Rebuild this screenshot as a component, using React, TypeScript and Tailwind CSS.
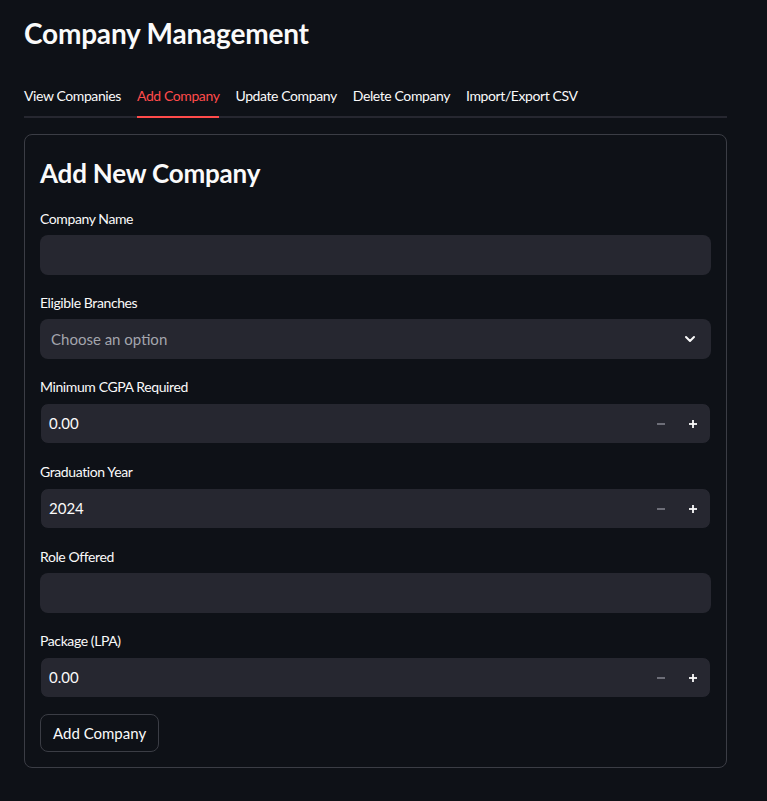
import React from 'react';

const tabs = ['View Companies', 'Add Company', 'Update Company', 'Delete Company', 'Import/Export CSV'];

function Label({ children }: { children: React.ReactNode }) {
  return (
    <div className="mb-[6px] h-[22px] pt-[1px] text-[14px] leading-[21px] tracking-[-0.4px] text-[#fafafa]">
      {children}
    </div>
  );
}

function TextField({ label }: { label: string }) {
  return (
    <div>
      <Label>{label}</Label>
      <div className="h-10 rounded-lg bg-[#262730]" />
    </div>
  );
}

function NumberField({ label, value }: { label: string; value: string }) {
  return (
    <div>
      <Label>{label}</Label>
      <div className="flex h-[41px] items-center rounded-lg border border-[#0e1117] bg-[#262730]">
        <span className="flex-1 pl-2 text-[15px] text-[#fafafa]">{value}</span>
        <span className="flex h-full w-8 items-center justify-center">
          <svg width="10" height="10" viewBox="0 0 10 10">
            <rect x="1" y="4.2" width="8" height="1.6" fill="#7f818b" />
          </svg>
        </span>
        <span className="mr-[1px] flex h-full w-8 items-center justify-center">
          <svg width="10" height="10" viewBox="0 0 10 10">
            <rect x="1" y="4.1" width="8" height="1.8" fill="#fafafa" />
            <rect x="4.1" y="1" width="1.8" height="8" fill="#fafafa" />
          </svg>
        </span>
      </div>
    </div>
  );
}

export default function App() {
  return (
    <div
      className="min-h-[801px] bg-[#0e1117] pl-6 pr-10 pt-[13px] text-[#fafafa]"
      style={{ fontFamily: 'Lato, "Noto Sans", sans-serif' }}
    >
      <h1 className="text-[28px] font-bold leading-[40px] tracking-[-0.2px]">Company Management</h1>

      <div className="mt-[32px] flex gap-4 border-b-2 border-[#262730]">
        {tabs.map((t) => (
          <div
            key={t}
            className={
              t === 'Add Company'
                ? '-mb-[2px] border-b-2 border-[#ff4b4b] pb-[10px] text-[14px] leading-[21px] tracking-[-0.4px] text-[#ff4b4b]'
                : 'pb-[10px] text-[14px] leading-[21px] tracking-[-0.4px] text-[#fafafa]'
            }
          >
            {t}
          </div>
        ))}
      </div>

      <div className="mt-4 flex flex-col gap-4 rounded-lg border border-[#3b3d45] p-[15px]">
        <h2 className="pt-[5px] text-[26px] font-bold leading-[36px] tracking-[-0.2px]">Add New Company</h2>
        <TextField label="Company Name" />
        <div>
          <Label>Eligible Branches</Label>
          <div className="flex h-10 items-center rounded-lg bg-[#262730] pl-[11px] pr-[15px]">
            <span className="flex-1 text-[15px] text-[#a3a5ad]">Choose an option</span>
            <svg width="12" height="12" viewBox="0 0 12 12" fill="none">
              <path d="M2 4l4 4 4-4" stroke="#fafafa" strokeWidth="2" strokeLinecap="round" strokeLinejoin="round" />
            </svg>
          </div>
        </div>
        <NumberField label="Minimum CGPA Required" value="0.00" />
        <NumberField label="Graduation Year" value="2024" />
        <TextField label="Role Offered" />
        <NumberField label="Package (LPA)" value="0.00" />
        <div>
          <button className="h-[38px] rounded-lg border border-[#3b3d45] bg-[#0e1117] px-3 text-[15px] text-[#fafafa]">
            Add Company
          </button>
        </div>
      </div>
    </div>
  );
}
